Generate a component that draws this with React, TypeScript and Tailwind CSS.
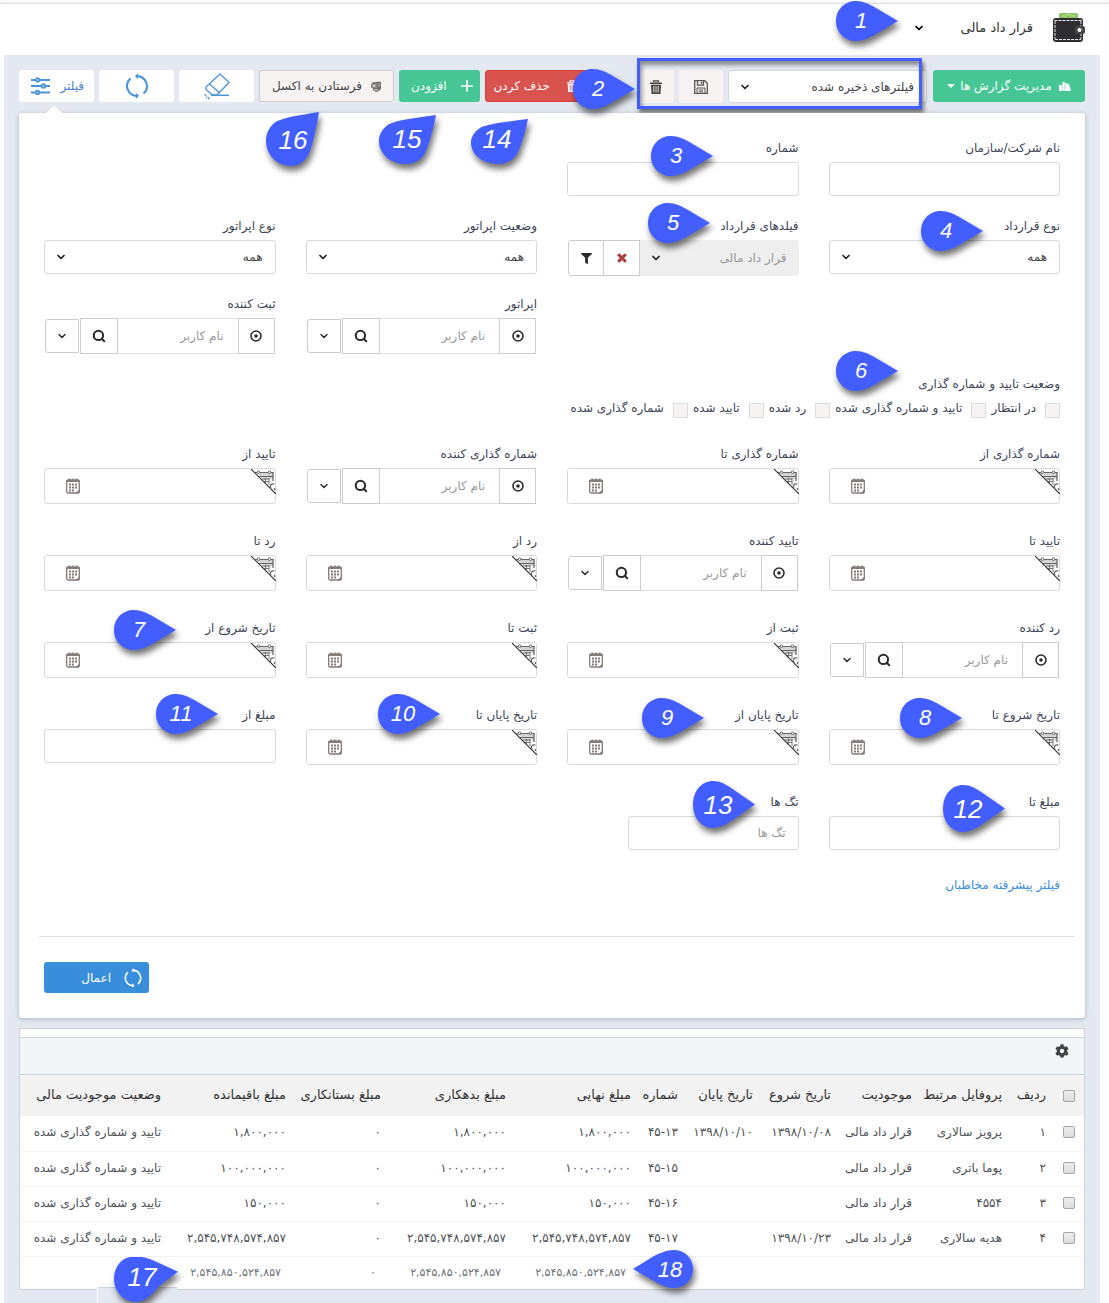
import React, { useId } from "react";
import { ChevronDown, Plus, Search } from "lucide-react";
import { FaCog, FaFilter, FaTimes } from "react-icons/fa";

/* ---------- drawings ---------- */

function Wallet() {
  return (
    <svg width="32" height="30" viewBox="0 0 32 30" aria-hidden="true">
      <rect x="6" y="0" width="19" height="9" rx="1.5" fill="#8bc560" />
      <path d="M9 3h4M18 3h4M13 1.5h5" stroke="#b4dd8c" strokeWidth="1.4" />
      <rect x="0" y="5" width="30" height="24" rx="3" fill="#2d2d30" />
      <path d="M1.500 7.500h27M2 26.500h26M2 8v18M28 8v18" fill="none" stroke="#e6e6e6" strokeWidth="1" strokeDasharray="3 1" />
      <rect x="22" y="13" width="10" height="8" rx="2.5" fill="#46464a" />
      <circle cx="26.5" cy="17" r="2" fill="#fff" />
    </svg>
  );
}

function Chart() {
  return (
    <svg width="12" height="11" viewBox="0 0 12 11" fill="currentColor" aria-hidden="true">
      <path d="M0 4h2.800v6H0zM3.300 1h2.400v9H3.300zM6.200 2h1.800v8H6.200z" />
      <path d="M8 3l1.800-.6L12 9.400 10 10H8z" />
    </svg>
  );
}

function Save() {
  return (
    <svg width="14" height="14" viewBox="0 0 14 14" fill="none" stroke="#5b5654" strokeWidth="1.300" aria-hidden="true">
      <path d="M.7.700h10l2.600 2.600v10H.7z" />
      <path d="M3.500.7v4.500h6V.7M7.500 1.800v2.200" />
      <path d="M3 13.300V8h8v5.300M4.800 10h4.400M4.800 11.800h4.400" strokeWidth="1" />
    </svg>
  );
}

function Trash({ size, cut }: { size: number; cut: string }) {
  return (
    <svg width={size} height={size} viewBox="0 0 13 14" fill="currentColor" aria-hidden="true">
      <path d="M.5 2.500h12v1.600H.5zM1.500 4.800h10L11 14H2z" />
      <path d="M4.200 2.500V.8h4.600v1.700" fill="none" stroke="currentColor" strokeWidth="1.300" />
      <path d="M4.300 6v6.500M6.500 6v6.500M8.700 6v6.500" stroke={cut} strokeWidth=".9" />
    </svg>
  );
}

function Excel() {
  return (
    <svg width="10" height="11" viewBox="0 0 10 11" aria-hidden="true">
      <path d="M1 1.5 9 .5l1 1v6L8 10l-3 1-3-2z" fill="#716c6b" />
      <path d="M0 2.500h6.500v4.500H0z" fill="#8a8585" />
      <path d="M1.500 3.600l3 2.400M4.500 3.600l-3 2.400M7.500 3H9M7.500 5H9M3 8.800h4" stroke="#f7f3f2" strokeWidth=".8" />
    </svg>
  );
}

function Eraser() {
  return (
    <svg width="26" height="27" viewBox="0 0 26 27" fill="none" stroke="#4a94da" strokeWidth="1.3" strokeLinejoin="round" aria-hidden="true">
      <path d="M16 1l9 8.500L13 22H8.500L2 16.500V14z" />
      <path d="M5.500 11L15.500 19.800" />
      <path d="M7 22.300h18" strokeWidth="1.500" />
      <path d="M.5 22h2M4.500 24v2.500M2 24.500l.8-.8" strokeWidth="1.600" />
    </svg>
  );
}

function Cycle({ size }: { size: number }) {
  return (
    <svg width={size} height={size} viewBox="0 0 22 24" fill="none" stroke="currentColor" strokeWidth="1.900" aria-hidden="true">
      <path d="M10.500 2.900a9.200 9.200 0 0 1 6.500 16.100" />
      <path d="M11.500 21.100A9.200 9.200 0 0 1 5 5" />
      <path d="M9 2.900l3-2.600v5.200zM13 21.100l-3-2.600v5.200z" fill="currentColor" stroke="none" />
    </svg>
  );
}

function Sliders() {
  return (
    <svg width="19" height="18" viewBox="0 0 19 18" fill="#fff" stroke="#4a94da" strokeWidth="1.900" aria-hidden="true">
      <path d="M0 3h19M0 9h19M0 15.500h19" />
      <circle cx="6.500" cy="3" r="1.700" />
      <circle cx="12.500" cy="9" r="1.700" />
      <circle cx="6.500" cy="15.500" r="1.700" />
    </svg>
  );
}

function Target() {
  return (
    <svg width="12" height="12" viewBox="0 0 12 12" aria-hidden="true">
      <circle cx="6" cy="6" r="5" fill="none" stroke="#2b2b2b" strokeWidth="1.600" />
      <circle cx="6" cy="6" r="1.800" fill="#2b2b2b" />
    </svg>
  );
}

function Calendar() {
  return (
    <svg width="14" height="16" viewBox="0 0 14 16" aria-hidden="true">
      <rect x=".7" y="2" width="12.600" height="13" rx="1.500" fill="#fff" stroke="#857b77" strokeWidth="1.300" />
      <path d="M.5 2h13v2H.5zM2.500.5H4V3H2.500zM6.200.5h1.500V3H6.200zM10 .5h1.500V3H10z" fill="#857b77" />
      <path d="M3 6.500h8M3 9.500h8M3 12.500h5" stroke="#857b77" strokeWidth="1.800" strokeDasharray="2 1" />
      <path d="M13.500 11.500v3.800h-4z" fill="#857b77" />
    </svg>
  );
}

function DateCorner() {
  return (
    <svg width="25" height="25" viewBox="0 0 25 25" fill="none" stroke="#666" aria-hidden="true">
      <path d="M6 4h16v6l-9 1z" fill="#d4d4d4" stroke="none" />
      <path d="M0 0l25 25" stroke="#333" strokeWidth="1.200" />
      <path d="M4 3.500h18.500M8 7.500h14" strokeWidth="1" />
      <circle cx="7.500" cy="3.200" r="1.300" fill="#fff" />
      <circle cx="18.500" cy="3.200" r="1.300" fill="#fff" />
      <path d="M22 3v9" strokeWidth="1.300" />
      <path d="M11 10h7M13 12.500h5M14.500 9v5M18 9v7" strokeWidth=".9" />
      <path d="M23.500 15c-4-.5-5 2-3.500 4.500M23.500 19v2" strokeWidth="1.200" />
    </svg>
  );
}

/* ---------- numbered callouts ---------- */

const shapes = {
  right: { box: "0 0 62 40", d: "M0 20C0 8 9 0 20 0C27 0 33 3 40 7L62 20L40 33C33 37 27 40 20 40C9 40 0 32 0 20Z" },
  left: { box: "0 0 62 40", d: "M62 20C62 8 53 0 42 0C35 0 29 3 22 6L0 20L22 33C29 37 35 40 42 40C53 40 62 32 62 20Z" },
  up: { box: "0 0 53 53", d: "M53 0C35 3 18 5 9 10C3 15 0 21 0 28C0 42 11 53 25 53C34 53 41 47 44 38C48 26 51 12 53 0Z" },
  high: { box: "0 0 64 46", d: "M0 22C0 10 8 1 16 0H26C34 0 44 6 64 15L46 29C38 38 32 46 22 46C10 46 0 36 0 22Z" },
};

type Pin = { n: number; x: number; y: number; w?: number; h?: number; shape?: keyof typeof shapes; tx?: number; ty?: number };

const pins: Pin[] = [
  { n: 1, x: 836, y: 1 },
  { n: 2, x: 573, y: 69 },
  { n: 3, x: 651, y: 136 },
  { n: 4, x: 921, y: 211 },
  { n: 5, x: 648, y: 203 },
  { n: 6, x: 836, y: 351 },
  { n: 7, x: 114, y: 610 },
  { n: 8, x: 900, y: 698 },
  { n: 9, x: 642, y: 698 },
  { n: 10, x: 378, y: 694 },
  { n: 11, x: 156, y: 694 },
  { n: 12, x: 943, y: 785, h: 47 },
  { n: 13, x: 693, y: 781, h: 47 },
  { n: 14, x: 471, y: 119, w: 57, h: 45, shape: "up", tx: 26, ty: 20 },
  { n: 15, x: 379, y: 115, w: 57, h: 49, shape: "up", tx: 28, ty: 24 },
  { n: 16, x: 266, y: 112, w: 53, h: 54, shape: "up", tx: 27, ty: 28 },
  { n: 17, x: 114, y: 1257, w: 64, h: 45, shape: "high", tx: 28, ty: 20 },
  { n: 18, x: 633, y: 1250, w: 60, h: 38, shape: "left", tx: 37, ty: 20 },
];

function Callout({ n, x, y, w = 62, h = 40, shape = "right", tx = 25, ty }: Pin) {
  const s = shapes[shape];
  const big = h > 42;
  return (
    <div className="pointer-events-none absolute" style={{ left: x, top: y, width: w, height: h }}>
      <svg
        className="absolute inset-0 h-full w-full overflow-visible drop-shadow-[2px_5px_3px_rgba(0,0,0,0.55)]"
        viewBox={s.box}
        preserveAspectRatio="none"
        aria-hidden="true"
      >
        <path d={s.d} fill="#425eff" />
      </svg>
      <span
        dir="ltr"
        className={
          "absolute -translate-x-1/2 -translate-y-1/2 leading-none text-white italic font-['Liberation_Sans',sans-serif] " +
          (big ? "text-[26px]" : "text-[22px]")
        }
        style={{ left: tx, top: ty ?? h / 2 }}
      >
        {n}
      </span>
    </div>
  );
}

/* ---------- form parts ---------- */

const label = "block h-5 text-xs leading-5 text-[#3b4557] mb-1 whitespace-nowrap";
const box = "block w-full rounded-[3px] border border-[#d9d9d9] bg-white px-3 text-xs text-[#444] outline-none";
const btn = "flex shrink-0 items-center justify-center border border-[#ccc] bg-white text-[#2b2b2b]";

function Text({ name, placeholder, className = "w-full" }: { name: string; placeholder?: string; className?: string }) {
  const id = useId();
  return (
    <div className={className}>
      <label htmlFor={id} className={label}>{name}</label>
      <input id={id} placeholder={placeholder} className={box + " h-[34px] placeholder:text-[#999]"} />
    </div>
  );
}

function Choice({ name }: { name: string }) {
  const id = useId();
  return (
    <div>
      <label htmlFor={id} className={label}>{name}</label>
      <div className="relative">
        <select id={id} className={box + " h-[34px] appearance-none"}>
          <option>همه</option>
        </select>
        <ChevronDown size={12} strokeWidth={3.5} className="pointer-events-none absolute left-[11px] top-[11px] text-[#222]" />
      </div>
    </div>
  );
}

function ContractFields() {
  const id = useId();
  return (
    <div>
      <label htmlFor={id} className={label}>فیلدهای قرارداد</label>
      <div className="flex h-9 pl-px">
        <div className="relative flex-1">
          <select id={id} disabled className="block h-full w-full appearance-none rounded-r-[3px] bg-[#eee] px-3 text-xs text-[#999] opacity-100">
            <option>قرار داد مالی</option>
          </select>
          <ChevronDown size={12} strokeWidth={3.5} className="pointer-events-none absolute left-2.5 top-3 text-[#222]" />
        </div>
        <button type="button" aria-label="پاک کردن" className={btn + " w-9 border-l-0"}><FaTimes size={12} color="#a83a36" strokeWidth={40} stroke="#a83a36" /></button>
        <button type="button" aria-label="فیلتر فیلدها" className={btn + " w-9 rounded-l-[3px]"}><FaFilter size={11} /></button>
      </div>
    </div>
  );
}

function User({ name, className = "" }: { name: string; className?: string }) {
  const id = useId();
  return (
    <div className={className}>
      <label htmlFor={id} className={label}>{name}</label>
      <div className="flex h-9 items-center px-px">
        <button type="button" aria-label="انتخاب" className={btn + " h-9 w-[37px]"}><Target /></button>
        <input id={id} placeholder="نام کاربر" className="h-9 w-0 flex-1 border-y border-[#ddd] px-3.5 text-xs outline-none placeholder:text-[#999]" />
        <button type="button" aria-label="جستجو" className={btn + " h-9 w-[38px]"}><Search size={14} strokeWidth={3.5} /></button>
        <button type="button" aria-label="بیشتر" className={btn + " mr-px h-[34px] w-[34px] rounded-l-[3px]"}><ChevronDown size={12} strokeWidth={3} /></button>
      </div>
    </div>
  );
}

function DateField({ name }: { name: string }) {
  const id = useId();
  return (
    <div>
      <label htmlFor={id} className={label}>{name}</label>
      <div className="relative">
        <input id={id} className={box + " h-9"} />
        <span className="absolute right-0 top-px"><DateCorner /></span>
        <button type="button" aria-label="تقویم" className="absolute left-[22px] top-2.5"><Calendar /></button>
      </div>
    </div>
  );
}

const row = "grid grid-cols-4 gap-x-[30px]";
const statuses = ["در انتظار", "تایید و شماره گذاری شده", "رد شده", "تایید شده", "شماره گذاری شده"];

function Filters() {
  return (
    <form className="relative mt-[11px] rounded-[3px] bg-white px-[25px] py-[25px] shadow-[0_1px_5px_rgba(60,75,95,0.35)]">
      <span className="absolute -top-[7px] left-[27px] h-0 w-0 border-x-[8px] border-b-[7px] border-x-transparent border-b-white" />
      <div className={row + " mb-5"}>
        <Text name="نام شرکت/سازمان" />
        <Text name="شماره" />
      </div>
      <div className={row + " mb-[18px]"}>
        <Choice name="نوع قرارداد" />
        <ContractFields />
        <Choice name="وضعیت اپراتور" />
        <Choice name="نوع اپراتور" />
      </div>
      <div className={row + " mb-5"}>
        <User name="اپراتور" className="col-start-3" />
        <User name="ثبت کننده" />
      </div>
      <fieldset className="mb-[26px]">
        <legend className={label}>وضعیت تایید و شماره گذاری</legend>
        <div className="flex h-5 items-center gap-[5px]">
          {statuses.map((s) => (
            <label key={s} className="flex items-center gap-[9px] whitespace-nowrap text-xs leading-5 text-[#3b4557]">
              <input type="checkbox" className="mt-1 h-[15px] w-[15px] appearance-none border border-[#ddd] bg-[#f7f3f3]" />
              {s}
            </label>
          ))}
        </div>
      </fieldset>
      <div className={row + " mb-[27px]"}>
        <DateField name="شماره گذاری از" />
        <DateField name="شماره گذاری تا" />
        <User name="شماره گذاری کننده" />
        <DateField name="تایید از" />
      </div>
      <div className={row + " mb-[27px]"}>
        <DateField name="تایید تا" />
        <User name="تایید کننده" />
        <DateField name="رد از" />
        <DateField name="رد تا" />
      </div>
      <div className={row + " mb-[27px]"}>
        <User name="رد کننده" />
        <DateField name="ثبت از" />
        <DateField name="ثبت تا" />
        <DateField name="تاریخ شروع از" />
      </div>
      <div className={row + " mb-[27px]"}>
        <DateField name="تاریخ شروع تا" />
        <DateField name="تاریخ پایان از" />
        <DateField name="تاریخ پایان تا" />
        <Text name="مبلغ از" />
      </div>
      <div className={row + " mb-[25px]"}>
        <Text name="مبلغ تا" />
        <Text name="تگ ها" placeholder="تگ ها" className="w-[171px]" />
      </div>
      <a href="#advanced" className="block w-fit text-xs leading-5 text-[#3a8fe0]">فیلتر پیشرفته مخاطبان</a>
      <hr className="-mr-[15px] -ml-[5px] mt-[41px] border-[#e2e2e2]" />
      <div className="mt-[25px] flex justify-end">
        <button type="submit" className="flex h-[31px] w-[105px] items-center gap-3 rounded-[3px] bg-[#388eda] pr-1.5 text-xs text-white">
          <Cycle size={20} />
          اعمال
        </button>
      </div>
    </form>
  );
}

/* ---------- results ---------- */

const columns: [string, number][] = [
  ["ردیف", 44], ["پروفایل مرتبط", 90], ["موجودیت", 81], ["تاریخ شروع", 78], ["تاریخ پایان", 75], ["شماره", 47],
  ["مبلغ نهایی", 125], ["مبلغ بدهکاری", 125], ["مبلغ بستانکاری", 95], ["مبلغ باقیمانده", 125], ["وضعیت موجودیت مالی", 149],
];

const approved = "تایید و شماره گذاری شده";
const kind = "قرار داد مالی";
const records = [
  ["۱", "پرویز سالاری", kind, "۱۳۹۸/۱۰/۰۸", "۱۳۹۸/۱۰/۱۰", "۴۵-۱۳", "۱,۸۰۰,۰۰۰", "۱,۸۰۰,۰۰۰", "۰", "۱,۸۰۰,۰۰۰", approved],
  ["۲", "پوما باتری", kind, "", "", "۴۵-۱۵", "۱۰۰,۰۰۰,۰۰۰", "۱۰۰,۰۰۰,۰۰۰", "۰", "۱۰۰,۰۰۰,۰۰۰", approved],
  ["۳", "۴۵۵۴", kind, "", "", "۴۵-۱۶", "۱۵۰,۰۰۰", "۱۵۰,۰۰۰", "۰", "۱۵۰,۰۰۰", approved],
  ["۴", "هدیه سالاری", kind, "۱۳۹۸/۱۰/۲۳", "", "۴۵-۱۷", "۲,۵۴۵,۷۴۸,۵۷۴,۸۵۷", "۲,۵۴۵,۷۴۸,۵۷۴,۸۵۷", "۰", "۲,۵۴۵,۷۴۸,۵۷۴,۸۵۷", approved],
];
const total = "۲,۵۴۵,۸۵۰,۵۲۴,۸۵۷";
const totals = ["", "", "", "", "", "", total, total, "۰", total, ""];

const tick = "block h-3 w-3 appearance-none rounded-[2px] border border-[#a5a5a5] bg-linear-to-b from-[#eee] to-[#dcdcdc]";

function Results() {
  return (
    <section className="mt-2.5 border border-[#ccd5dd] bg-white pt-2">
      <div className="flex h-[38px] items-start border-y border-y-[#ccd5dd] bg-[#f3f6f8] px-[15px] pt-1.5">
        <button type="button" aria-label="تنظیمات" className="text-[#444]"><FaCog size={14} /></button>
      </div>
      <table className="w-full table-fixed border-collapse text-right">
        <colgroup>
          <col style={{ width: 30 }} />
          {columns.map(([name, width]) => <col key={name} style={{ width }} />)}
        </colgroup>
        <thead>
          <tr className="h-[41px] bg-[#f2f2f2] text-[13px] text-[#333]">
            <th className="pr-[9px]"><input type="checkbox" aria-label="انتخاب همه" className={tick} /></th>
            {columns.map(([name]) => (
              <th key={name} scope="col" className="whitespace-nowrap pr-2 pb-0.5 font-normal">{name}</th>
            ))}
          </tr>
        </thead>
        <tbody>
          {records.map((r) => (
            <tr key={r[0]} className="h-[35px] border-b border-[#f3f3f3] text-xs text-[#4c5156]">
              <td className="pr-[9px] pb-0.5"><input type="checkbox" aria-label={"انتخاب ردیف " + r[0]} className={tick} /></td>
              {r.map((c, i) => (
                <td key={i} className="whitespace-nowrap pr-2 pb-0.5"><bdi dir={i >= 3 && i < 10 ? "ltr" : "rtl"}>{c}</bdi></td>
              ))}
            </tr>
          ))}
        </tbody>
        <tfoot>
          <tr className="h-[33px] text-[11px] text-[#6b7278]">
            <td />
            {totals.map((c, i) => (
              <td key={i} className="whitespace-nowrap pr-[13px]"><bdi dir="ltr">{c}</bdi></td>
            ))}
          </tr>
        </tfoot>
      </table>
    </section>
  );
}

/* ---------- page ---------- */

function Toolbar() {
  return (
    <div className="flex h-8 items-stretch justify-between text-xs">
      <div className="flex gap-1.5">
        <button type="button" className="flex w-[152px] items-center justify-center gap-[7px] rounded-[3px] bg-[#45c694] text-white">
          <Chart />
          <span>مدیریت گزارش ها</span>
          <span className="-mr-0.5 border-x-[4px] border-t-[4px] border-x-transparent border-t-white" />
        </button>
        <div className="relative flex gap-[5px]">
          <div className="relative w-[199px]">
            <select aria-label="فیلترهای ذخیره شده" className="h-[33px] w-full appearance-none rounded-[3px] border border-[#d5d5d5] bg-white px-3 text-xs text-[#444]">
              <option>فیلترهای ذخیره شده</option>
            </select>
            <ChevronDown size={12} strokeWidth={3.5} className="pointer-events-none absolute left-[11px] top-[11px] text-[#222]" />
          </div>
          <button type="button" aria-label="ذخیره" className="flex h-[33px] w-11 items-center justify-center rounded-[3px] bg-[#f7f3f2] pl-1 pr-1"><Save /></button>
          <button type="button" aria-label="حذف فیلتر" className="flex h-[33px] w-9 items-center justify-center rounded-[3px] bg-[#f7f3f2] text-[#444]"><Trash size={14} cut="#f7f3f2" /></button>
          <span className="pointer-events-none absolute -left-px -top-3 -bottom-[7px] right-[5px] border-[3px] border-[#425eff] shadow-[2px_4px_4px_rgba(0,0,0,0.5),inset_2px_4px_4px_rgba(0,0,0,0.4)]" />
        </div>
      </div>
      <div className="flex gap-[5px]">
        <button type="button" className="flex w-[106px] items-center justify-start gap-4 rounded-[3px] border border-[#d43f3a] bg-[#d9534f] pr-3 text-white"><Trash size={12} cut="#d9534f" />حذف کردن</button>
        <button type="button" className="flex w-[81px] items-center justify-between rounded-[3px] bg-[#45c694] pr-1 pl-3 text-white"><Plus size={18} strokeWidth={2.2} />افزودن</button>
        <button type="button" className="flex w-[135px] items-center justify-between rounded-[3px] border border-[#ccc] bg-[#f7f3f2] px-3 text-[#444]"><Excel />فرستادن به اکسل</button>
        <button type="button" aria-label="پاک کردن فیلتر" className="flex w-[75px] items-center justify-center rounded-[3px] bg-white"><Eraser /></button>
        <button type="button" aria-label="بارگذاری دوباره" className="flex w-[75px] items-center justify-center rounded-[3px] bg-white text-[#4a94da]"><Cycle size={26} /></button>
        <button type="button" className="flex w-[75px] items-center justify-between rounded-[3px] bg-white pr-2.5 pl-3 text-[#4a7fd0]">فیلتر<Sliders /></button>
      </div>
    </div>
  );
}

export default function App() {
  return (
    <div dir="rtl" className="relative overflow-hidden bg-white font-['DejaVu_Sans',sans-serif]">
      <header className="mt-[3px] flex h-[52px] items-center border-t border-[#e0e0e0] pr-6 pb-1 shadow-[0_-1px_2px_rgba(0,0,0,0.08)]">
        <Wallet />
        <h1 className="mr-5 text-[13px] text-[#333]">قرار داد مالی</h1>
        <button type="button" aria-label="منو" className="mr-9"><ChevronDown size={12} strokeWidth={3.5} /></button>
      </header>
      <main className="mr-[9px] ml-1 bg-[#e4e9f1] px-[15px] pt-[15px] pb-[13px]">
        <Toolbar />
        <Filters />
        <Results />
      </main>
      <span className="absolute bottom-0 left-[97px] h-4 w-20 border-t border-l border-t-[#ccd5dd] border-l-white bg-[#e4e9f1]" />
      {pins.map((p) => <Callout key={p.n} {...p} />)}
    </div>
  );
}
